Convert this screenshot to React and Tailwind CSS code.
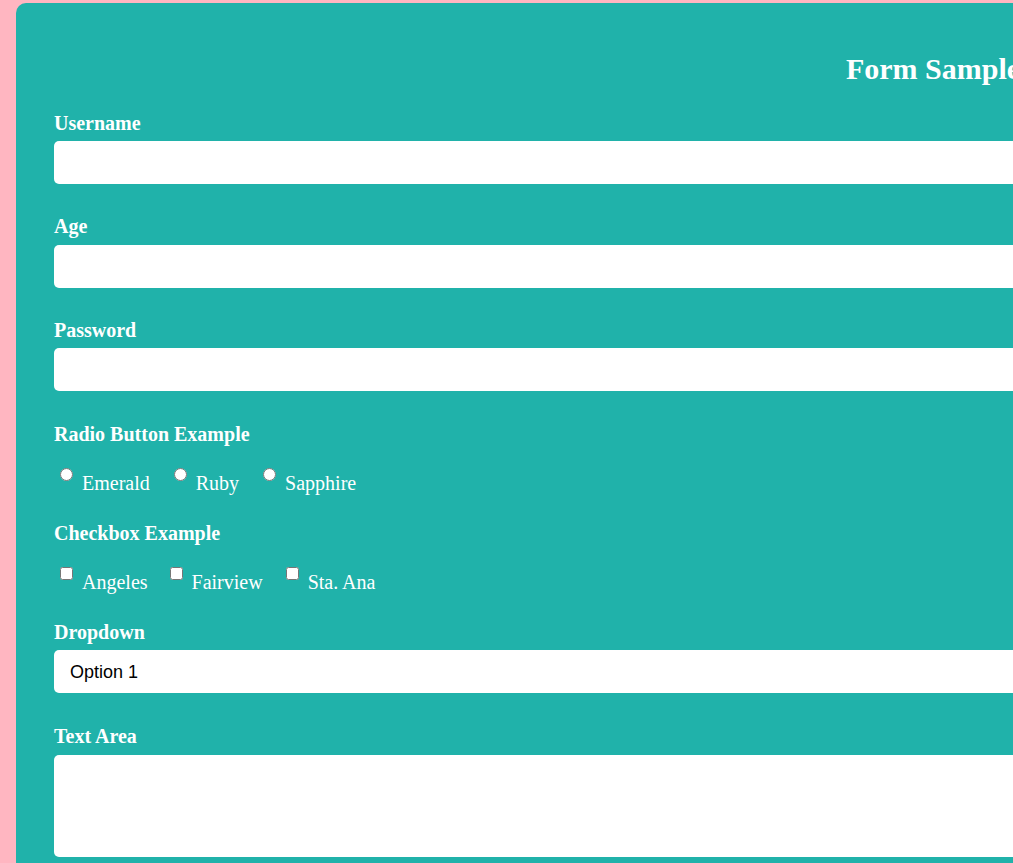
import React from "react";

function Label({ children, className = "" }) {
  return (
    <label className={"block text-[20px] font-bold leading-[24px] text-white " + className}>
      {children}
    </label>
  );
}

export default function App() {
  return (
    <div className="h-screen w-full overflow-hidden bg-[#ffb6c1] pt-[3px] pl-[16px] font-['Liberation_Serif',serif]">
      <div className="w-[1834px] rounded-[10px] bg-[#20b2aa] px-[38px] pt-[48px] pb-[38px]">
        <h2 className="text-center text-[30px] font-bold leading-[36px] text-white">Form Sample</h2>

        <Label className="mt-[24px]">Username</Label>
        <input type="text" className="mt-[6px] block h-[43px] w-full rounded-[5px] bg-white px-[16px] outline-none" />

        <Label className="mt-[30px]">Age</Label>
        <input type="number" className="mt-[7px] block h-[43px] w-full rounded-[5px] bg-white px-[16px] outline-none" />

        <Label className="mt-[30px]">Password</Label>
        <input type="password" className="mt-[6px] block h-[43px] w-full rounded-[5px] bg-white px-[16px] outline-none" />

        <Label className="mt-[31px]">Radio Button Example</Label>
        <div className="mt-[22px] flex items-start text-[20px] leading-[24px] text-white">
          <input type="radio" name="gem" className="ml-[6px] h-[13px] w-[13px]" />
          <span className="ml-[9px] mt-[3px] mr-[18px]">Emerald</span>
          <input type="radio" name="gem" className="ml-[6px] h-[13px] w-[13px]" />
          <span className="ml-[9px] mt-[3px] mr-[18px]">Ruby</span>
          <input type="radio" name="gem" className="ml-[6px] h-[13px] w-[13px]" />
          <span className="ml-[9px] mt-[3px]">Sapphire</span>
        </div>

        <Label className="mt-[26px]">Checkbox Example</Label>
        <div className="mt-[22px] flex items-start text-[20px] leading-[24px] text-white">
          <input type="checkbox" className="ml-[6px] h-[13px] w-[13px]" />
          <span className="ml-[9px] mt-[3px] mr-[16px]">Angeles</span>
          <input type="checkbox" className="ml-[6px] h-[13px] w-[13px]" />
          <span className="ml-[9px] mt-[3px] mr-[17px]">Fairview</span>
          <input type="checkbox" className="ml-[6px] h-[13px] w-[13px]" />
          <span className="ml-[9px] mt-[3px]">Sta. Ana</span>
        </div>

        <Label className="mt-[26px]">Dropdown</Label>
        <select className="mt-[6px] block h-[43px] w-full appearance-none rounded-[5px] bg-white px-[16px] pt-[1px] font-['Liberation_Sans',sans-serif] text-[18px] text-black outline-none">
          <option>Option 1</option>
          <option>Option 2</option>
          <option>Option 3</option>
        </select>

        <Label className="mt-[31px]">Text Area</Label>
        <textarea className="mt-[7px] block h-[102px] w-full resize-none rounded-[5px] bg-white p-[10px] outline-none" />
      </div>
    </div>
  );
}
